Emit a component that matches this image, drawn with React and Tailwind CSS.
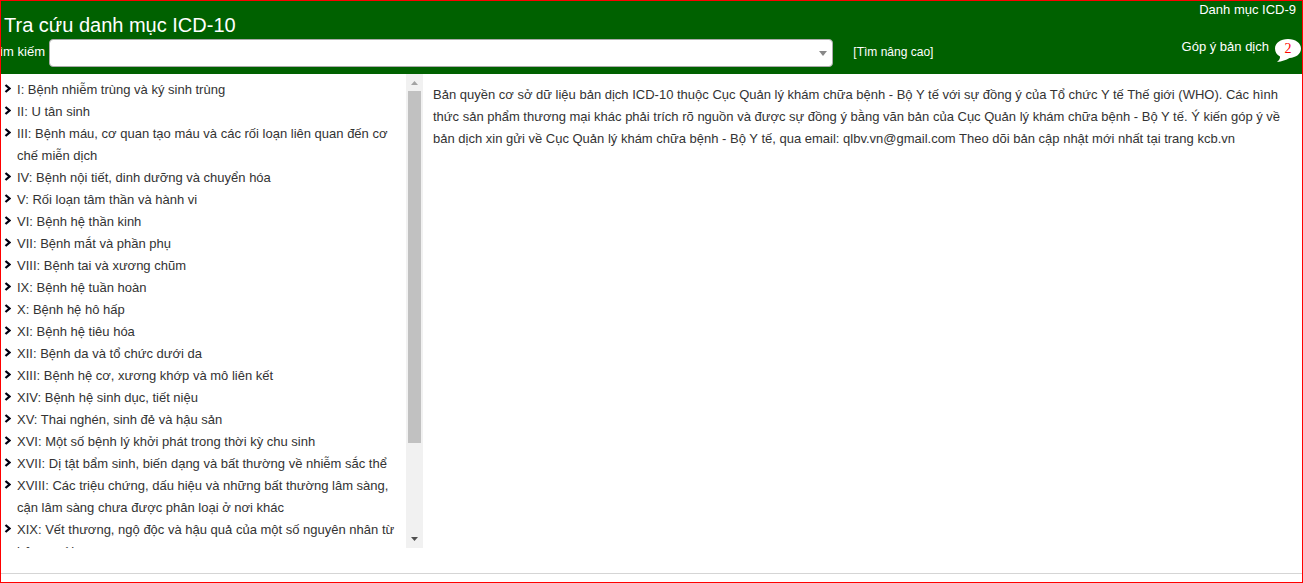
import React, { useState } from "react";

const chapters = [
  { code: "I", name: "Bệnh nhiễm trùng và ký sinh trùng" },
  { code: "II", name: "U tân sinh" },
  { code: "III", name: "Bệnh máu, cơ quan tạo máu và các rối loạn liên quan đến cơ chế miễn dịch" },
  { code: "IV", name: "Bệnh nội tiết, dinh dưỡng và chuyển hóa" },
  { code: "V", name: "Rối loạn tâm thần và hành vi" },
  { code: "VI", name: "Bệnh hệ thần kinh" },
  { code: "VII", name: "Bệnh mắt và phần phụ" },
  { code: "VIII", name: "Bệnh tai và xương chũm" },
  { code: "IX", name: "Bệnh hệ tuần hoàn" },
  { code: "X", name: "Bệnh hệ hô hấp" },
  { code: "XI", name: "Bệnh hệ tiêu hóa" },
  { code: "XII", name: "Bệnh da và tổ chức dưới da" },
  { code: "XIII", name: "Bệnh hệ cơ, xương khớp và mô liên kết" },
  { code: "XIV", name: "Bệnh hệ sinh dục, tiết niệu" },
  { code: "XV", name: "Thai nghén, sinh đẻ và hậu sản" },
  { code: "XVI", name: "Một số bệnh lý khởi phát trong thời kỳ chu sinh" },
  { code: "XVII", name: "Dị tật bẩm sinh, biến dạng và bất thường về nhiễm sắc thể" },
  { code: "XVIII", name: "Các triệu chứng, dấu hiệu và những bất thường lâm sàng, cận lâm sàng chưa được phân loại ở nơi khác" },
  { code: "XIX", name: "Vết thương, ngộ độc và hậu quả của một số nguyên nhân từ bên ngoài" },
];

const Header = () => {
  const [keyword, setKeyword] = useState("");

  return (
    <header className="flex h-[73px] shrink-0 justify-between bg-[#006100] text-white">
      <div className="flex min-w-0 flex-1 flex-col">
        <h1 className="pt-3 pl-[3px] text-[20px] leading-[24px]">Tra cứu danh mục ICD-10</h1>
        <div className="flex items-center pt-[2px]">
          <div className="flex w-[77%] items-center">
            <div className="flex w-12 shrink-0 justify-end overflow-hidden pr-1 pb-[2px]">
              <label htmlFor="keyword" className="whitespace-nowrap text-[13px] leading-5">
                Tìm kiếm
              </label>
            </div>
            <div className="relative min-w-0 flex-1">
              <select
                id="keyword"
                value={keyword}
                onChange={(e) => setKeyword(e.target.value)}
                className="block h-7 w-full appearance-none rounded-[4px] border border-[#aaaaaa] bg-white px-2 text-[13px] text-[#444444]"
              >
                <option value=""></option>
              </select>
              <svg
                viewBox="0 0 8 5"
                className="pointer-events-none absolute top-3 right-[6px] h-[5px] w-2"
                fill="#888888"
              >
                <path d="M0 0h8L4 5z" />
              </svg>
            </div>
          </div>
          <a href="#nang-cao" className="ml-5 pb-[2px] text-[12px] leading-5">
            [Tìm nâng cao]
          </a>
        </div>
      </div>
      <div className="flex w-[220px] flex-col items-end justify-between pb-[9px] text-[13px]">
        <a href="#icd9" className="pr-[6px] leading-[18px]">
          Danh mục ICD-9
        </a>
        <a href="#gop-y" className="flex items-start leading-4">
          <span>Góp ý bản dịch</span>
          <svg viewBox="0 0 28 26" className="ml-[5px] h-[26px] w-7">
            <path
              fill="#ffffff"
              d="M14 0C21.4 0 27 4 27 9.500C27 15 22 18.500 15.500 19C12 21 8 22.500 3 23C5 21.500 6.200 19.500 6 17.500C2.800 15.800 1 13 1 9.500C1 4 6.600 0 14 0z"
            />
            <text x="14" y="14" textAnchor="middle" fontFamily="Liberation Serif" fontSize="14" fill="#ff0000">
              2
            </text>
          </svg>
        </a>
      </div>
    </header>
  );
};

const ChapterList = () => {
  return (
    <ul className="min-w-0 flex-1 overflow-hidden pt-[5px] pr-2 pl-[3px]">
      {chapters.map((item) => (
        <li key={item.code} className="flex items-start">
          <svg viewBox="0 0 7 9" className="mt-[5px] mr-[6px] h-[9px] w-[7px] shrink-0" fill="none">
            <path d="M1.500 1l4 3.500l-4 3.500" stroke="#000011" strokeWidth="2.300" />
          </svg>
          <a href={`#${item.code}`}>
            {item.code}: {item.name}
          </a>
        </li>
      ))}
    </ul>
  );
};

const ScrollBar = () => {
  return (
    <div className="flex w-[17px] shrink-0 flex-col items-center bg-[#f1f1f1]" aria-hidden="true">
      <svg viewBox="0 0 17 17" className="h-[17px] w-[17px] shrink-0" fill="#a3a3a3">
        <path d="M5 11h7L8.500 7z" />
      </svg>
      <div className="flex w-full flex-1 justify-center">
        <div className="h-4/5 w-[13px] bg-[#c1c1c1]" />
      </div>
      <svg viewBox="0 0 17 17" className="h-[17px] w-[17px] shrink-0" fill="#505050">
        <path d="M5 6h7l-3.500 4z" />
      </svg>
    </div>
  );
};

const App = () => {
  return (
    <div className="flex h-screen flex-col border border-[#ff0000] bg-white font-['Liberation_Sans',Arial,sans-serif] text-[13px] leading-[22px] text-[#333333]">
      <Header />
      <main className="mb-[25px] flex min-h-0 flex-1">
        <nav className="flex w-[422px] shrink-0">
          <ChapterList />
          <ScrollBar />
        </nav>
        <section className="min-w-0 flex-1 pt-[10px] pr-4 pl-[10px]">
          <p>
            Bản quyền cơ sở dữ liệu bản dịch ICD-10 thuộc Cục Quản lý khám chữa bệnh - Bộ Y tế với sự đồng ý của Tổ
            chức Y tế Thế giới (WHO). Các hình thức sản phẩm thương mại khác phải trích rõ nguồn và được sự đồng ý
            bằng văn bản của Cục Quản lý khám chữa bệnh - Bộ Y tế. Ý kiến góp ý về bản dịch xin gửi về Cục Quản lý
            khám chữa bệnh - Bộ Y tế, qua email: qlbv.vn@gmail.com Theo dõi bản cập nhật mới nhất tại trang kcb.vn
          </p>
        </section>
      </main>
      <footer className="h-[9px] shrink-0 border-t border-[#d5d5d5]" />
    </div>
  );
};

export default App;
